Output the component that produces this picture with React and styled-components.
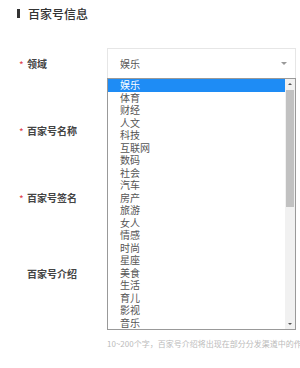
import React from "react";
import styled, { createGlobalStyle } from "styled-components";

const GlobalStyle = createGlobalStyle`
  html, body {
    margin: 0;
    padding: 0;
    background: #fff;
  }
  body {
    font-family: "Noto Sans CJK SC", "Liberation Sans", sans-serif;
    color: #333;
  }
`;

const Page = styled.div`
  width: 300px;
  height: 368px;
  overflow: hidden;
  background: #fff;
`;

const Title = styled.h2`
  display: flex;
  align-items: center;
  gap: 8px;
  margin: 0;
  padding: 5px 0 0 17px;
  height: 17px;
  font-size: 12px;
  font-weight: 500;
  color: #333;
  line-height: 17px;

  &::before {
    content: "";
    width: 3px;
    height: 9px;
    background: #333;
  }
`;

const Form = styled.div`
  display: flex;
  flex-direction: column;
  padding-top: 26px;
`;

const Row = styled.div`
  display: grid;
  grid-template-columns: 107px 189px;
  margin-bottom: ${(p) => p.gap || 0}px;
`;

const Label = styled.div`
  display: flex;
  align-items: center;
  height: 31px;
  padding-left: 19px;
  font-size: 10px;
  font-weight: 700;
  color: #444;

  &::before {
    content: "*";
    width: 8px;
    color: ${(p) => (p.required ? "#e0404a" : "transparent")};
    font-weight: 400;
    font-size: 10px;
    position: relative;
    top: 1px;
  }
`;

const Field = styled.div`
  position: relative;
`;

const SelectBox = styled.div`
  display: flex;
  align-items: center;
  justify-content: space-between;
  box-sizing: border-box;
  height: 31px;
  padding: 0 8px 0 12px;
  border: 1px solid #e6e6e6;
  font-size: 10px;
  color: #555;

  &::after {
    content: "";
    border-left: 3px solid transparent;
    border-right: 3px solid transparent;
    border-top: 3px solid #999;
  }
`;

const Input = styled.div`
  box-sizing: border-box;
  height: ${(p) => p.h || 31}px;
  border: 1px solid #e6e6e6;
`;

const Hint = styled.div`
  margin-top: 8px;
  font-size: 8px;
  line-height: 12px;
  color: #bbb;
  white-space: nowrap;
`;

const Dropdown = styled.div`
  position: absolute;
  top: 30px;
  left: 0;
  width: 189px;
  box-sizing: border-box;
  display: flex;
  border: 1px solid #999;
  background: #fff;
  z-index: 5;
`;

const List = styled.ul`
  flex: 1;
  margin: 0;
  padding: 0;
  list-style: none;
`;

const Item = styled.li`
  height: 12.5px;
  line-height: 12.5px;
  padding-left: 12px;
  font-size: 10px;
  color: ${(p) => (p.active ? "#fff" : "#555")};
  background: ${(p) => (p.active ? "#1e8cf5" : "transparent")};
`;

const Scrollbar = styled.div`
  width: 10px;
  display: flex;
  flex-direction: column;
  background: #f1f1f1;
`;

const Arrow = styled.div`
  height: 10px;
  display: flex;
  align-items: center;
  justify-content: center;

  &::after {
    content: "";
    border-left: 2px solid transparent;
    border-right: 2px solid transparent;
    ${(p) => (p.up ? "border-bottom" : "border-top")}: 2px solid #555;
  }
`;

const Track = styled.div`
  flex: 1;
  padding: 1px 1px;
`;

const Thumb = styled.div`
  height: 117px;
  background: #c1c1c1;
`;

const options = [
  "娱乐", "体育", "财经", "人文", "科技", "互联网", "数码", "社会", "汽车", "房产",
  "旅游", "女人", "情感", "时尚", "星座", "美食", "生活", "育儿", "影视", "音乐",
];

export default function App() {
  return (
    <Page>
      <GlobalStyle />
      <Title>百家号信息</Title>
      <Form>
        <Row gap={36}>
          <Label required>领域</Label>
          <Field>
            <SelectBox>娱乐</SelectBox>
            <Dropdown>
              <List>
                {options.map((o, i) => (
                  <Item key={o} active={i === 0}>
                    {o}
                  </Item>
                ))}
              </List>
              <Scrollbar>
                <Arrow up />
                <Track>
                  <Thumb />
                </Track>
                <Arrow />
              </Scrollbar>
            </Dropdown>
          </Field>
        </Row>
        <Row gap={36}>
          <Label required>百家号名称</Label>
          <Field>
            <Input />
          </Field>
        </Row>
        <Row gap={45}>
          <Label required>百家号签名</Label>
          <Field>
            <Input />
          </Field>
        </Row>
        <Row>
          <Label>百家号介绍</Label>
          <Field>
            <Input h={72} />
            <Hint>10~200个字，百家号介绍将出现在部分分发渠道中的作者简介中</Hint>
          </Field>
        </Row>
      </Form>
    </Page>
  );
}
